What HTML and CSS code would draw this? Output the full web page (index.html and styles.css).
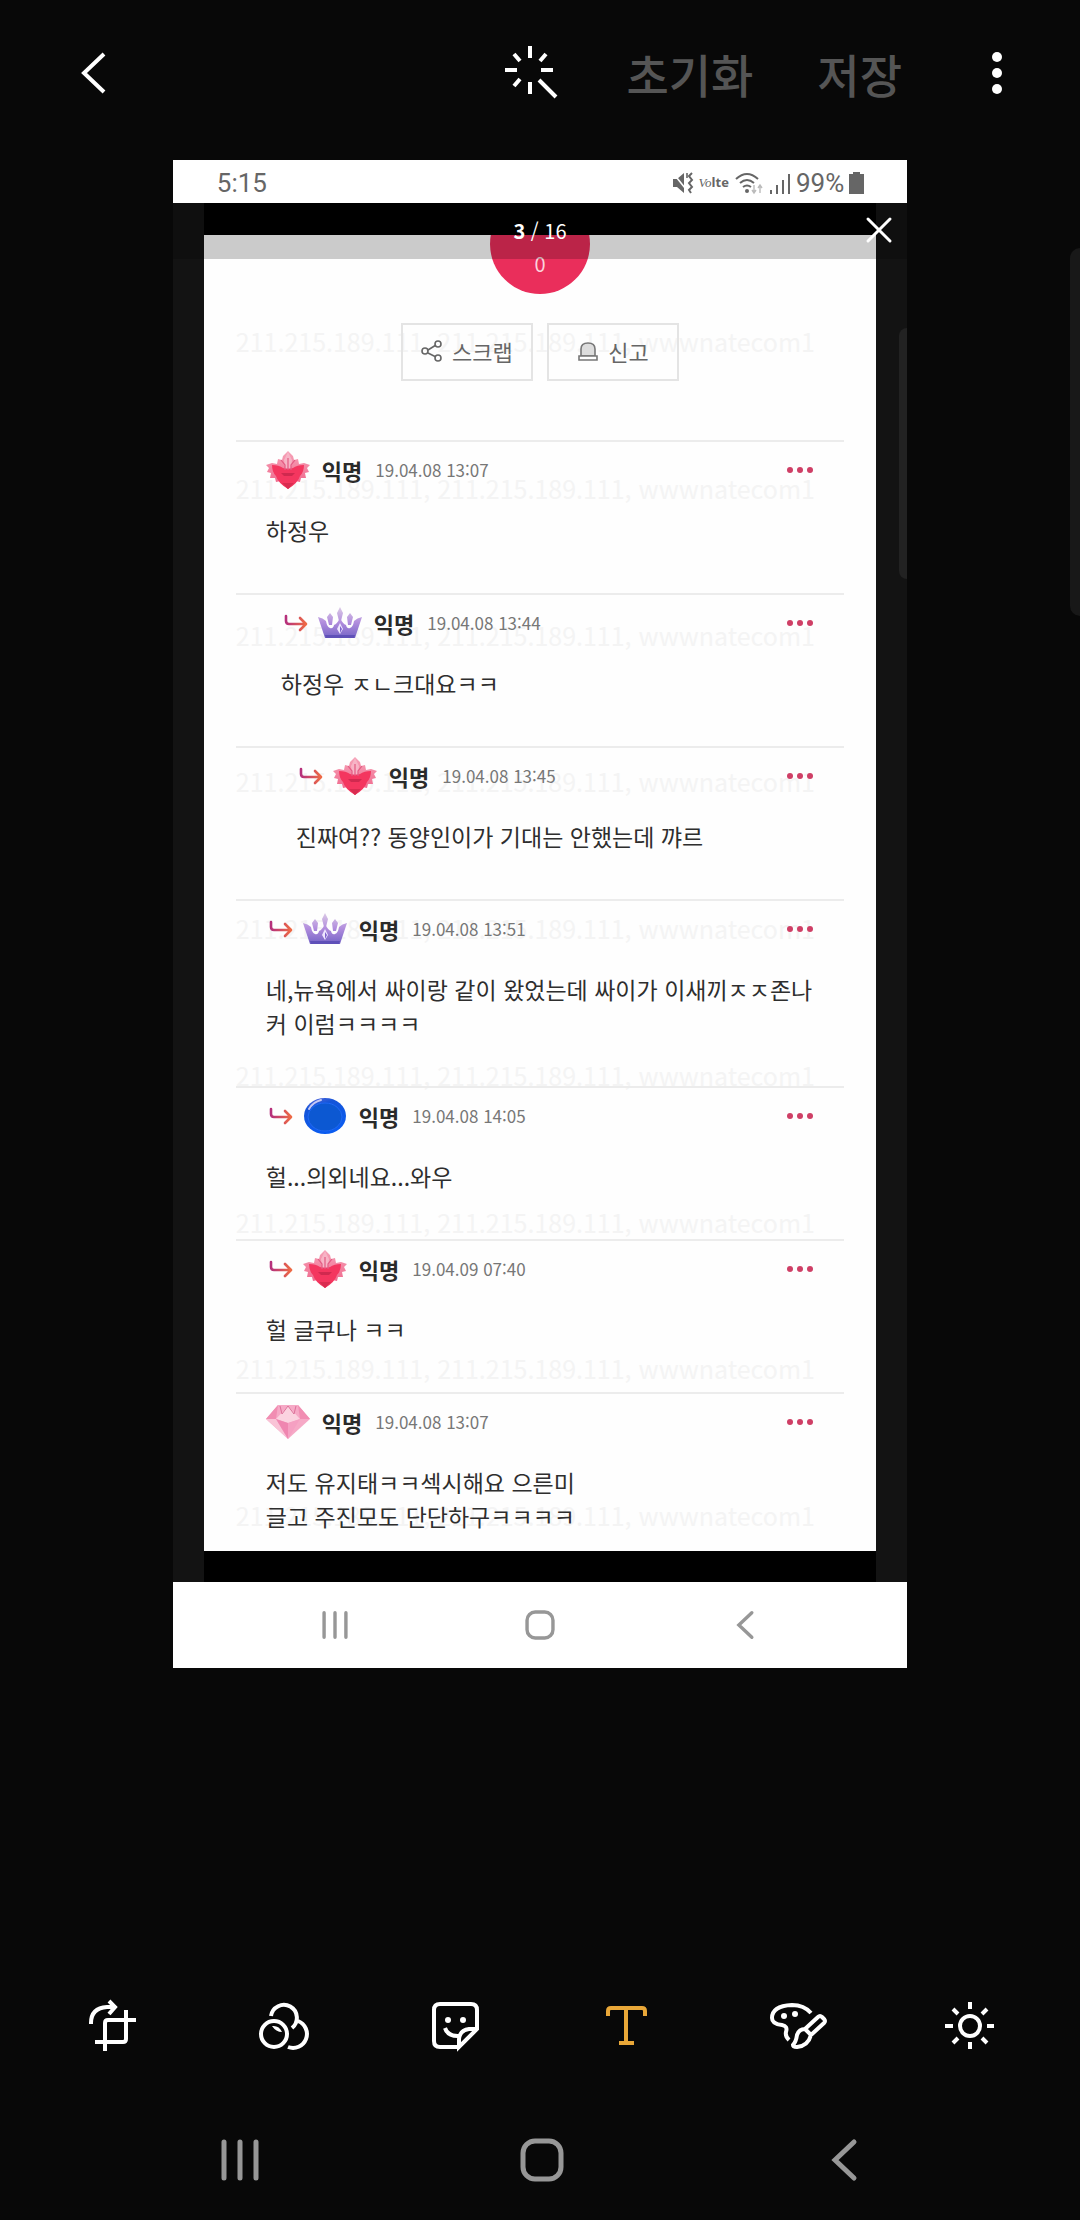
FILE: index.html
```html
<!DOCTYPE html>
<html lang="ko">
  <head>
    <meta charset="UTF-8" />
    <meta name="viewport" content="width=device-width, initial-scale=1.0" />
    <title>사진 편집</title>
    <link rel="stylesheet" href="styles.css">
  </head>

  <body>
    <!-- shared symbols -->
    <svg class="defs" width="0" height="0" aria-hidden="true">
      <defs>
        <linearGradient id="g-reply" x1="0" x2="1" y1="0" y2="0">
          <stop offset="0" stop-color="#b5307c" />
          <stop offset="1" stop-color="#ee6a45" />
        </linearGradient>
        <linearGradient id="g-crown" gradientUnits="userSpaceOnUse" x1="0" x2="0" y1="3" y2="34">
          <stop offset="0" stop-color="#dccbe6" />
          <stop offset="0.5" stop-color="#b18ddd" />
          <stop offset="1" stop-color="#7564c6" />
        </linearGradient>
        <linearGradient id="g-blue" x1="0" x2="0.4" y1="0" y2="1">
          <stop offset="0" stop-color="#6a6fdc" />
          <stop offset="0.3" stop-color="#1454d8" />
          <stop offset="1" stop-color="#0b5cf0" />
        </linearGradient>
        <linearGradient id="g-petal" x1="0" x2="0" y1="0" y2="1">
          <stop offset="0" stop-color="#f6a3b8" />
          <stop offset="1" stop-color="#ef5f86" />
        </linearGradient>
      </defs>
      <symbol id="reply" viewBox="0 0 24 18">
        <path d="M2 2v5q0 3 3 3h16M16 4l6 6-6 6" fill="none" stroke="url(#g-reply)" stroke-width="2.6" stroke-linecap="round" stroke-linejoin="round" />
      </symbol>
      <symbol id="flower" viewBox="0 0 44 38">
        <path d="M22 0l5 5 1 4 4-1 1 5 5-1 6 2-3 3 2 4-4 1 1 5-5 0-1 4-5-1-7 8-7-8-5 1-1-4-5 0 1-5-4-1 2-4-3-3 6-2 5 1 1-5 4 1 1-4z" fill="url(#g-petal)" />
        <path d="M6 14q7 0 11 3 5 2 10 0 4-3 11-3 0 7-4 11-2 7-12 13Q12 32 10 25 6 21 6 14z" fill="#f4365f" />
        <path d="M15 22h14l-3 3h-8z" fill="#d0294f" />
        <path d="M22 1l4 8-1 8h-6l-1-8z" fill="#f7b4c6" />
        <path d="M15 9l4 5v5M29 9l-4 5v5M22 7v12" fill="none" stroke="#e25a82" stroke-width="1.2" />
        <path d="M16 32h12l-6 6z" fill="#d92c50" />
      </symbol>
      <symbol id="crown" viewBox="0 0 44 38">
        <g fill="url(#g-crown)">
          <path d="M0 13q5 1 8 4 1 6 4 7 3 1 4-3 3-1 6-7 3 6 6 7 1 4 4 3 3-1 4-7 3-3 8-4l-7 21H7z" />
          <path d="M22 3l3 6-2 8h-2l-2-8zM12 9l3 4-1 8h-3l-2-8zM32 9l3 4-2 8h-3l-1-8z" />
        </g>
        <path d="M7 31h30l-1 3H8z" fill="#5f50b8" />
        <path d="M22 19l3 6-3 5-3-5z" fill="#efe6ff" />
        <path d="M22 22l2 3-2 4z" fill="#7d62cc" />
      </symbol>
      <symbol id="button" viewBox="0 0 44 38">
        <ellipse cx="22" cy="19" rx="21" ry="18" fill="url(#g-blue)" />
        <ellipse cx="22" cy="20" rx="17" ry="14" fill="#0c58d2" stroke="#2068f4" stroke-width="1" />
        <path d="M6 12q4-7 12-9" fill="none" stroke="#c6c8f4" stroke-width="2" stroke-linecap="round" />
      </symbol>
      <symbol id="gem" viewBox="0 0 44 38">
        <path d="M12 2h20l12 14-22 20L0 16z" fill="#f6a9c6" />
        <path d="M12 2l-2 14H0zM32 2l2 14h10z" fill="#f18db2" />
        <path d="M10 16l12-13 12 13-12 4z" fill="#fbd3e0" />
        <path d="M0 16h10l12 20z" fill="#f9c3d6" />
        <path d="M10 16l12 4v16z" fill="#ef86b0" />
        <path d="M34 16l-12 4v16z" fill="#f5a0c2" />
        <path d="M14 3l2 8 6-8 6 8 2-8" fill="none" stroke="#dd7099" stroke-width="1" />
      </symbol>
      <symbol id="dots" viewBox="0 0 28 8">
        <circle cx="4" cy="4" r="3" />
        <circle cx="14" cy="4" r="3" />
        <circle cx="24" cy="4" r="3" />
      </symbol>
      <symbol id="recents" viewBox="0 0 44 44">
        <path d="M6 4v36M22 4v36M38 4v36" />
      </symbol>
      <symbol id="home" viewBox="0 0 44 44">
        <rect x="3" y="3" width="38" height="38" rx="12" />
      </symbol>
      <symbol id="back" viewBox="0 0 44 44">
        <path d="M32 4L13 22l19 18" />
      </symbol>
    </svg>

    <header class="topbar">
      <button class="icon-button" aria-label="뒤로">
        <svg width="60" height="60" viewBox="0 0 60 60"><path d="M41 11L21 30l20 19" /></svg>
      </button>
      <div class="topbar-actions">
        <button class="icon-button" aria-label="자동 보정">
          <svg width="60" height="60" viewBox="0 0 60 60">
            <path d="M28 3v12M28 39v12M3 27h12M39 27h12M12 11l6 7M44 11l-6 7M12 43l6-7M37 37l17 17" />
          </svg>
        </button>
        <button class="text-button" disabled>초기화</button>
        <button class="text-button" disabled>저장</button>
        <button class="icon-button" aria-label="더보기">
          <svg width="60" height="60" viewBox="0 0 60 60">
            <g class="solid"><circle cx="31" cy="14" r="5" /><circle cx="31" cy="30" r="5" /><circle cx="31" cy="46" r="5" /></g>
          </svg>
        </button>
      </div>
    </header>

    <main class="photo">
      <div class="statusbar">
        <span>5:15</span>
        <div class="status-icons">
          <svg width="22" height="24" viewBox="0 0 22 24">
            <path d="M1 8h4l7-6v20l-7-6H1z" fill="#666" />
            <path d="M1 2l12 15" stroke="#fff" stroke-width="1.6" />
            <path d="M15 2v5" stroke="#666" stroke-width="1.6" />
            <path d="M20 2l-3 3 3 4-3 3 3 4-3 3 2 3" fill="none" stroke="#666" stroke-width="2" />
          </svg>
          <span class="volte"><i>Vo</i><b>lte</b></span>
          <svg width="30" height="24" viewBox="0 0 30 24">
            <path d="M2 8q11-10 22 0M6 12q7-6 14 0M9 16q4-3 8 0" fill="none" stroke="#666" stroke-width="2" />
            <circle cx="13" cy="20" r="2" fill="#666" />
            <path d="M20 14v7M18 19l2 3 2-3M26 22v-7M24 17l2-3 2 3" fill="none" stroke="#bbb" stroke-width="1.4" />
          </svg>
          <svg width="22" height="24" viewBox="0 0 22 24">
            <path d="M2 19v4M8 14v9M14 9v14M20 3v20" stroke="#666" stroke-width="2" />
          </svg>
          <span>99%</span>
          <svg width="15" height="24" viewBox="0 0 15 24">
            <path d="M4 1h7v2h4v20H0V3h4z" fill="#666" />
          </svg>
        </div>
      </div>

      <div class="viewer">
        <div class="page">
          <div class="watermark" aria-hidden="true">
            <span>211.215.189.111, 211.215.189.111, wwwnatecom1</span>
            <span>211.215.189.111, 211.215.189.111, wwwnatecom1</span>
            <span>211.215.189.111, 211.215.189.111, wwwnatecom1</span>
            <span>211.215.189.111, 211.215.189.111, wwwnatecom1</span>
            <span>211.215.189.111, 211.215.189.111, wwwnatecom1</span>
            <span>211.215.189.111, 211.215.189.111, wwwnatecom1</span>
            <span>211.215.189.111, 211.215.189.111, wwwnatecom1</span>
            <span>211.215.189.111, 211.215.189.111, wwwnatecom1</span>
            <span>211.215.189.111, 211.215.189.111, wwwnatecom1</span>
          </div>

          <div class="like">
            <span class="like-count">0</span>
          </div>

          <div class="page-actions">
            <button class="outline-button">
              <svg width="22" height="22" viewBox="0 0 22 22" fill="none" stroke="#666" stroke-width="1.6">
                <path d="M7 10l8-5M7 13l8 4" /><circle cx="4" cy="11" r="3" /><circle cx="17" cy="4" r="3" /><circle cx="17" cy="18" r="3" />
              </svg>
              스크랩
            </button>
            <button class="outline-button">
              <svg width="22" height="22" viewBox="0 0 22 22" fill="#ddd" stroke="#777" stroke-width="1.6">
                <path d="M4 16V9q0-6 7-6t7 6v7z" /><path d="M2 16h18v4H2z" fill="#fff" />
              </svg>
              신고
            </button>
          </div>

          <div class="comments">
            <article class="comment">
              <div class="comment-head">
                <svg class="avatar"><use href="#flower" /></svg>
                <strong>익명</strong>
                <time>19.04.08 13:07</time>
                <button class="more" aria-label="더보기"><svg><use href="#dots" /></svg></button>
              </div>
              <p>하정우</p>
            </article>
            <article class="comment depth-1">
              <div class="comment-head">
                <svg class="reply"><use href="#reply" /></svg>
                <svg class="avatar"><use href="#crown" /></svg>
                <strong>익명</strong>
                <time>19.04.08 13:44</time>
                <button class="more" aria-label="더보기"><svg><use href="#dots" /></svg></button>
              </div>
              <p>하정우 ㅈㄴ크대요ㅋㅋ</p>
            </article>
            <article class="comment depth-2">
              <div class="comment-head">
                <svg class="reply"><use href="#reply" /></svg>
                <svg class="avatar"><use href="#flower" /></svg>
                <strong>익명</strong>
                <time>19.04.08 13:45</time>
                <button class="more" aria-label="더보기"><svg><use href="#dots" /></svg></button>
              </div>
              <p>진짜여?? 동양인이가 기대는 안했는데 꺄르</p>
            </article>
            <article class="comment">
              <div class="comment-head">
                <svg class="reply"><use href="#reply" /></svg>
                <svg class="avatar"><use href="#crown" /></svg>
                <strong>익명</strong>
                <time>19.04.08 13:51</time>
                <button class="more" aria-label="더보기"><svg><use href="#dots" /></svg></button>
              </div>
              <p>네,뉴욕에서 싸이랑 같이 왔었는데 싸이가 이새끼ㅈㅈ존나<br>커 이럼ㅋㅋㅋㅋ</p>
            </article>
            <article class="comment">
              <div class="comment-head">
                <svg class="reply"><use href="#reply" /></svg>
                <svg class="avatar"><use href="#button" /></svg>
                <strong>익명</strong>
                <time>19.04.08 14:05</time>
                <button class="more" aria-label="더보기"><svg><use href="#dots" /></svg></button>
              </div>
              <p>헐...의외네요...와우</p>
            </article>
            <article class="comment">
              <div class="comment-head">
                <svg class="reply"><use href="#reply" /></svg>
                <svg class="avatar"><use href="#flower" /></svg>
                <strong>익명</strong>
                <time>19.04.09 07:40</time>
                <button class="more" aria-label="더보기"><svg><use href="#dots" /></svg></button>
              </div>
              <p>헐 글쿠나 ㅋㅋ</p>
            </article>
            <article class="comment">
              <div class="comment-head">
                <svg class="avatar"><use href="#gem" /></svg>
                <strong>익명</strong>
                <time>19.04.08 13:07</time>
                <button class="more" aria-label="더보기"><svg><use href="#dots" /></svg></button>
              </div>
              <p>저도 유지태ㅋㅋ섹시해요 으른미<br>글고 주진모도 단단하구ㅋㅋㅋㅋ</p>
            </article>
          </div>
        </div>

        <div class="viewer-bar">
          <span class="counter"><b>3</b> / 16</span>
          <button class="close" aria-label="닫기">
            <svg width="28" height="28" viewBox="0 0 28 28"><path d="M3 3l22 22M25 3L3 25" /></svg>
          </button>
        </div>
        <div class="edge-handle"></div>
      </div>

      <div class="photo-nav">
        <svg><use href="#recents" /></svg>
        <svg><use href="#home" /></svg>
        <svg><use href="#back" /></svg>
      </div>
    </main>

    <nav class="toolbar">
      <button aria-label="자르기">
        <svg width="60" height="60" viewBox="0 0 60 60">
          <path d="M9 29v-1q0-15 16-16h8M27 6l6 6-6 7M23 56V28q0-3 3-3h28M44 15v29q0 3-3 3H13" />
        </svg>
      </button>
      <button aria-label="필터">
        <svg width="60" height="60" viewBox="0 0 60 60">
          <circle cx="21" cy="39" r="13" />
          <path d="M18 21a13 13 0 1 1 21 12M45 26a13.5 13.5 0 0 1-10 26" />
          <path class="solid" d="M19 31q7-1 10 6-6 0-10-6z" />
        </svg>
      </button>
      <button aria-label="스티커">
        <svg width="60" height="60" viewBox="0 0 60 60">
          <path d="M34 52H15q-6 0-6-6V15q0-6 6-6h31q6 0 6 6v19L34 52v-8q1-9 10-10h8M20 33q3 9 15 8" />
          <g class="solid"><circle cx="23" cy="25" r="3" /><circle cx="38" cy="25" r="3" /></g>
        </svg>
      </button>
      <button class="active" aria-label="텍스트">
        <svg width="60" height="60" viewBox="0 0 60 60">
          <path d="M12 21v-5q0-3 3-3h31q3 0 3 3v5M30 13v35M23 48h15" />
        </svg>
      </button>
      <button aria-label="그리기">
        <svg width="60" height="60" viewBox="0 0 60 60">
          <path d="M43 18Q36 10 24 10 4 11 4 23q0 6 10 7 6 1 4 7-1 4 3 8" />
          <path d="M37 34l13-12q2-2 4 0l2 2q2 2 0 4L43 40zM37 34q-6 0-8 6-1 7-4 10 0 2 4 2 11-1 14-12" />
          <g class="solid"><circle cx="16" cy="21" r="3" /><circle cx="27" cy="19" r="3" /></g>
        </svg>
      </button>
      <button aria-label="밝기">
        <svg width="60" height="60" viewBox="0 0 60 60">
          <circle cx="31" cy="31" r="10" />
          <path d="M31 7v7M31 47v7M6 31h8M48 31h7M14 14l5 5M48 14l-5 5M14 48l5-5M48 48l-5-5" />
        </svg>
      </button>
    </nav>

    <nav class="navbar">
      <button aria-label="최근 앱"><svg><use href="#recents" /></svg></button>
      <button aria-label="홈"><svg><use href="#home" /></svg></button>
      <button aria-label="뒤로 가기"><svg><use href="#back" /></svg></button>
    </nav>

    <div class="edge-panel"></div>
  </body>
</html>
```
FILE: styles.css
```css
* {
  box-sizing: border-box;
}

body {
  margin: 0;
  min-height: 100vh;
  display: flex;
  flex-direction: column;
  position: relative;
  background-color: #080808;
  font-family: "Noto Sans CJK KR", sans-serif;
}

.defs {
  position: absolute;
}

button {
  margin: 0;
  padding: 0;
  border: none;
  background: none;
  font-family: inherit;
  cursor: pointer;
}

svg {
  display: block;
}

/* top bar */
.topbar {
  height: 160px;
  padding: 0 54px 14px 63px;
  display: flex;
  justify-content: space-between;
  align-items: center;
}

.topbar-actions {
  display: flex;
  align-items: center;
  gap: 64px;
}

.icon-button svg,
.toolbar svg {
  fill: none;
  stroke: #fff;
  stroke-width: 4;
}

.icon-button .solid,
.toolbar .solid {
  fill: #fff;
  stroke: none;
}

.text-button {
  font-size: 46px;
  font-weight: 500;
  line-height: 60px;
  color: #555;
}

/* edited picture */
.photo {
  width: 68%;
  margin: 0 auto;
}

.statusbar {
  height: 43px;
  padding: 2px 43px 0 44px;
  display: flex;
  justify-content: space-between;
  align-items: center;
  background-color: #fff;
  font-family: Roboto, sans-serif;
  font-size: 26px;
  line-height: 40px;
  color: #666;
}

.status-icons {
  display: flex;
  align-items: center;
  gap: 5px;
}

.volte {
  font-family: "Liberation Serif", serif;
  font-size: 13px;
}

.volte b {
  font-family: "Open Sans", sans-serif;
}

.viewer {
  position: relative;
  padding: 32px 31px 31px;
  background: linear-gradient(to right, #131313 31px, #000 31px calc(100% - 31px), #131313 calc(100% - 31px));
}

.page {
  position: relative;
  padding: 0 32px;
  background-color: #fefefe;
  overflow: hidden;
}

.watermark {
  position: absolute;
  top: 86px;
  bottom: 16px;
  left: 32px;
  display: flex;
  flex-direction: column;
  justify-content: space-between;
  font-size: 25px;
  line-height: 40px;
  color: #f4f4f4;
  white-space: nowrap;
}

.like {
  width: 100px;
  height: 100px;
  margin: -41px auto 0;
  padding-top: 55px;
  border-radius: 50%;
  background-color: #ea2e5b;
  color: #fbd3dd;
  font-size: 20px;
  line-height: 30px;
  text-align: center;
}

.page-actions {
  position: relative;
  margin: 29px 0 59px;
  display: flex;
  justify-content: center;
  gap: 14px;
}

.outline-button {
  width: 132px;
  height: 58px;
  padding-bottom: 2px;
  display: flex;
  justify-content: center;
  align-items: center;
  gap: 9px;
  border: 2px solid #e4e4e4;
  font-size: 22px;
  color: #666;
}

.comments {
  position: relative;
}

.comment {
  padding: 8px 30px 46px;
  border-top: 2px solid #ececec;
}

.comment:last-child {
  padding-bottom: 18px;
}

.depth-1 {
  padding-left: 45px;
}

.depth-2 {
  padding-left: 60px;
}

.comment-head {
  height: 40px;
  display: flex;
  align-items: center;
}

.reply {
  width: 24px;
  height: 18px;
  margin: 0 10px 0 3px;
}

.avatar {
  width: 44px;
  height: 38px;
}

.comment strong {
  margin: 0 13px 0 12px;
  font-size: 22px;
  font-weight: 700;
  line-height: 32px;
  color: #2a2a2a;
}

.comment time {
  font-size: 17px;
  line-height: 24px;
  color: #777;
}

.more {
  margin-left: auto;
}

.more svg {
  width: 28px;
  height: 8px;
  fill: #cf3f66;
}

.comment p {
  margin: 23px -12px 0 0;
  font-size: 23px;
  line-height: 34px;
  color: #2e2e2e;
}

/* translucent strip over the page */
.viewer-bar {
  position: absolute;
  top: 0;
  left: 0;
  right: 0;
  height: 56px;
  padding-bottom: 2px;
  display: flex;
  justify-content: center;
  align-items: center;
  background-color: rgba(0, 0, 0, 0.2);
  color: #fff;
  font-size: 20px;
}

.close {
  position: absolute;
  right: 14px;
}

.close svg {
  fill: none;
  stroke: #fff;
  stroke-width: 3;
  stroke-linecap: round;
}

.edge-handle {
  position: absolute;
  top: 125px;
  right: 0;
  width: 8px;
  height: 251px;
  border-radius: 8px 0 0 8px;
  background-color: #222;
}

.photo-nav {
  height: 86px;
  padding: 0 59px;
  display: grid;
  grid-template-columns: repeat(3, 1fr);
  align-items: center;
  justify-items: center;
  background-color: #fff;
}

.photo-nav svg,
.navbar svg {
  fill: none;
  stroke: #979797;
  stroke-width: 5;
  stroke-linecap: round;
}

.photo-nav svg {
  width: 30px;
  height: 30px;
}

/* editor tools */
.toolbar {
  margin-top: auto;
  height: 150px;
  padding: 0 25px 0 26px;
  display: grid;
  grid-template-columns: repeat(6, 1fr);
  align-items: center;
  justify-items: center;
}

.toolbar .active svg {
  stroke: #e9a738;
}

.navbar {
  height: 120px;
  padding: 0 85px 0 89px;
  display: grid;
  grid-template-columns: repeat(3, 1fr);
  align-items: center;
  justify-items: center;
}

.navbar svg {
  width: 44px;
  height: 44px;
}

.edge-panel {
  position: absolute;
  top: 248px;
  right: 0;
  width: 10px;
  height: 368px;
  border-radius: 10px 0 0 10px;
  background-color: #181818;
}
```
